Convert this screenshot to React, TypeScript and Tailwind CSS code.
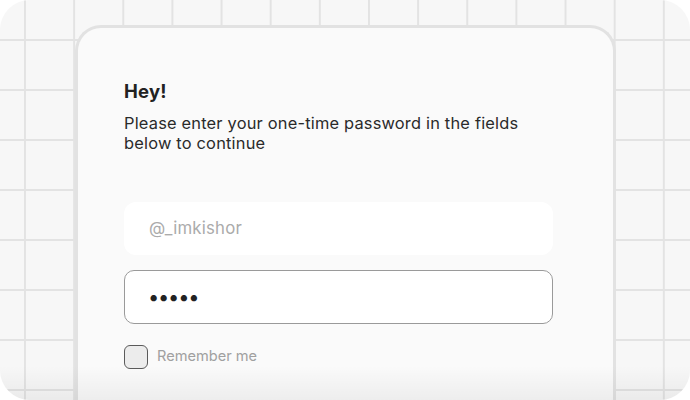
import React from 'react';

// --- Login card over a grid canvas ---
export default function App() {
  return (
    <div className="w-[690px] h-[400px] bg-white font-['Inter',sans-serif]">
      <div className="relative w-[690px] h-[400px] rounded-[30px] overflow-hidden bg-[#f7f7f7] bg-[linear-gradient(to_right,#e3e3e3_2px,transparent_2px),linear-gradient(to_bottom,#e3e3e3_2px,transparent_2px)] bg-size-[49.15px_50px] bg-position-[24px_39px]">
        <div className="ml-[75px] mt-[25px] w-[541px] h-[400px] rounded-t-[26px] border-[3px] border-b-0 border-[#e2e2e2] bg-[#fafafa] pl-[46px] pt-[51px]">
          <h1 className="text-[18.5px] leading-[24px] font-bold tracking-[0.2px] text-[#222]">Hey!</h1>
          <p className="mt-[11px] w-[429px] text-[16.4px] leading-[19.5px] tracking-[0.2px] text-[#2a2a2a]">
            Please enter your one-time password in the fields below to continue
          </p>

          <div className="mt-[49px] w-[429px] h-[53px] rounded-[12px] bg-white flex items-center pl-[25px] text-[16.8px] tracking-[0.2px] text-[#ababab]">
            @_imkishor
          </div>

          <div className="mt-[15px] w-[429px] h-[54px] rounded-[10px] border border-[#9a9a9a] bg-white flex items-center pl-[23px] text-[20px] tracking-[-1.2px] text-[#222]">
            •••••
          </div>

          <label className="mt-[21px] flex items-center gap-[9px]">
            <span className="w-[24px] h-[24px] rounded-[6px] border-[1.5px] border-[#5a5a5a] bg-[#ececec]" />
            <span className="text-[14.6px] text-[#a0a0a0]">Remember me</span>
          </label>
        </div>

        {/* bottom fade */}
        <div className="absolute left-0 right-0 bottom-0 h-[34px] bg-[linear-gradient(to_bottom,rgba(0,0,0,0),rgba(0,0,0,0.05))]" />
      </div>
    </div>
  );
}
